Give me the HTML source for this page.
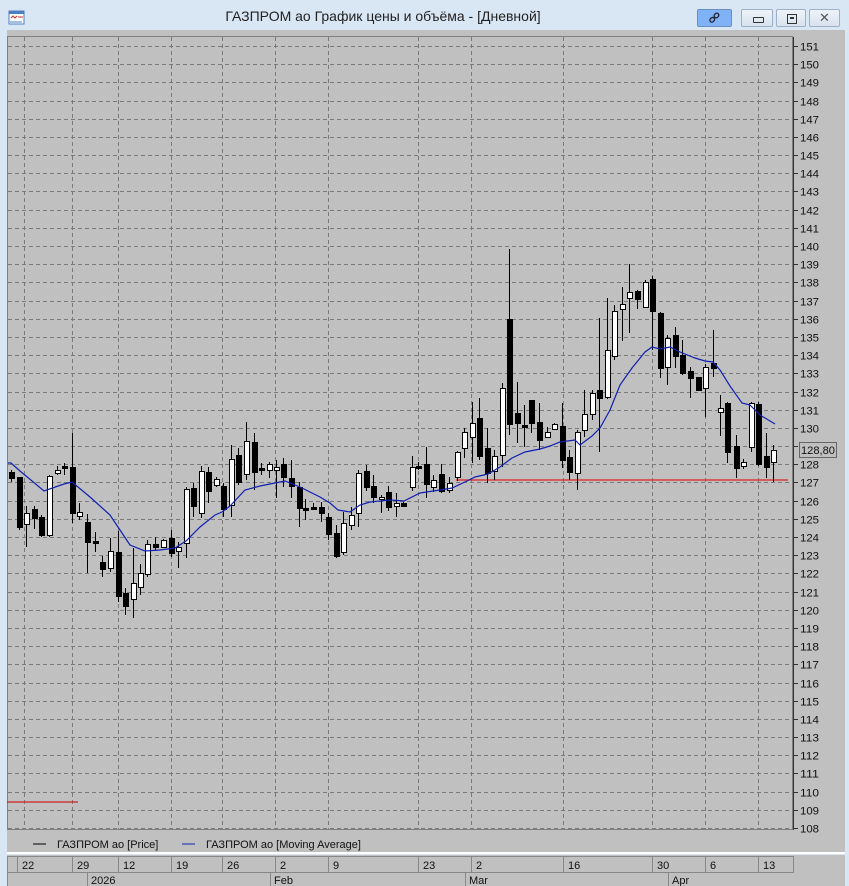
<!DOCTYPE html>
<html><head><meta charset="utf-8">
<style>
html,body{margin:0;padding:0;width:849px;height:886px;overflow:hidden;background:#d9e6f4;font-family:"Liberation Sans","DejaVu Sans",sans-serif;}
#t{position:absolute;left:0;top:8px;width:766px;text-align:center;font-size:14px;color:#222;}
.b{position:absolute;top:9px;height:18px;border:1px solid #9fb0c6;border-radius:2px;background:linear-gradient(#eef3f9,#d8e2ee);box-sizing:border-box;}
svg{position:absolute;left:0;top:0}
</style></head><body>
<svg width="849" height="886" id="s" xmlns="http://www.w3.org/2000/svg" font-family="Liberation Sans, DejaVu Sans, sans-serif">
<rect x="7" y="30" width="838" height="856" fill="#c0c0c0"/>
<g id="g"></g>
</svg>
<div id="t">ГАЗПРОМ ао График цены и объёма - [Дневной]</div>
<div class="b" style="left:697px;width:35px;background:#7fb2f6;border-color:#6b8fc0"><svg width="33" height="16" style="position:static"><g transform="translate(16,8) rotate(-45)" fill="none" stroke="#223" stroke-width="1.3"><rect x="-5" y="-2" width="5" height="4" rx="2"/><rect x="1" y="-2" width="5" height="4" rx="2"/></g></svg></div>
<div class="b" style="left:741px;width:32px"><div style="position:absolute;left:11px;top:7px;width:9px;height:4px;border:1px solid #333;border-radius:1px"></div></div>
<div class="b" style="left:776px;width:30px"><div style="position:absolute;left:10px;top:4px;width:8px;height:8px;border:1px solid #333"></div><div style="position:absolute;left:13px;top:7px;width:4px;height:2px;background:#333"></div></div>
<div class="b" style="left:809px;width:31px"><div style="position:absolute;left:9px;top:0px;font-size:13px;color:#555;font-weight:bold">✕</div></div>
<svg width="20" height="20" style="left:8px;top:10px"><rect x="1" y="1" width="15" height="13" fill="#fff" stroke="#4a7fc0"/><rect x="1" y="1" width="15" height="3" fill="#4a7fc0"/><path d="M3 8 l2-2 2 2 2-2" stroke="#c03030" fill="none"/><path d="M10 7 h5" stroke="#c03030"/><path d="M3 13v-2M5 13v-2M7 13v-2M9 13v-2M11 13v-2M13 13v-2" stroke="#4a7fc0"/></svg>
<script>
var g=document.getElementById('g'),h='';
function Y(p){return 46+(151-p)*18.186;}
// plot border
h+='<rect x="7.5" y="36.5" width="785" height="793" fill="#c0c0c0" stroke="#808080"/>';
for(var p=108;p<=151;p++){var y=Math.round(Y(p))+.5;
h+='<line x1="8" y1="'+y+'" x2="792" y2="'+y+'" stroke="#7a7a7a" stroke-dasharray="4,3"/>';
h+='<line x1="793" y1="'+y+'" x2="798" y2="'+y+'" stroke="#333"/>';
h+='<text x="800" y="'+(y+4)+'" font-size="11" fill="#111" textLength="19" lengthAdjust="spacingAndGlyphs">'+p+'</text>';}
var vx=[24,72,118,171,222,275,328,418,471,563,652,705,758];
vx.forEach(function(x){h+='<line x1="'+(x+.5)+'" y1="37" x2="'+(x+.5)+'" y2="829" stroke="#7a7a7a" stroke-dasharray="4,3"/>';});
h+='<line x1="793.5" y1="37" x2="793.5" y2="830" stroke="#333"/>';
// red lines
h+='<line x1="456" y1="480" x2="788" y2="480" stroke="#e02020" stroke-width="1.3"/>';
h+='<line x1="7" y1="802" x2="78" y2="802" stroke="#d02020" stroke-width="1.3"/>';
// candles: x, wickTop, wickBot, bodyTop, bodyBot, black
var c=[[11,470,482,472,478,1],[19,477,530,477,527,1],[26,506,547,513,524,0],[34,506,529,509,518,1],[41,515,537,517,535,1],[49,475,537,476,535,0],[57,466,475,470,473,0],[64,463,475,466,468,1],[72,433,523,467,513,1],[79,503,520,512,516,0],[87,514,573,522,542,1],[95,532,552,541,543,1],[102,556,577,562,569,1],[110,538,572,551,568,0],[118,531,602,552,596,1],[125,588,615,593,606,1],[133,548,618,583,599,0],[140,564,595,573,587,0],[147,540,577,544,574,0],[155,537,550,544,547,1],[163,539,548,540,547,0],[171,530,557,538,553,1],[178,542,568,547,551,0],[186,487,558,489,543,0],[193,483,517,488,506,1],[201,466,518,471,513,0],[208,467,503,472,491,1],[216,477,487,479,485,0],[223,483,517,486,509,1],[231,445,517,459,505,0],[238,448,485,455,482,1],[246,422,480,441,474,0],[254,433,490,442,472,1],[261,463,475,468,470,1],[269,462,478,464,470,0],[276,460,498,467,470,0],[283,458,487,464,477,1],[291,460,498,478,486,1],[299,482,527,487,508,1],[305,499,520,508,510,1],[313,503,510,507,508,1],[321,502,522,507,513,1],[328,513,540,517,534,1],[336,525,558,533,556,1],[343,512,555,523,552,0],[351,507,530,515,525,0],[358,470,527,473,513,0],[366,465,491,471,487,1],[373,475,503,486,497,1],[381,495,513,497,499,0],[388,486,511,492,507,1],[396,493,517,503,506,0],[403,502,507,503,506,1],[412,456,491,467,487,0],[418,462,470,466,467,1],[426,447,498,464,484,1],[433,475,492,480,487,0],[441,464,493,474,491,1],[449,477,493,483,490,0],[457,451,481,452,477,0],[464,428,458,432,448,0],[472,402,463,423,437,0],[479,398,460,418,456,1],[487,428,483,448,473,1],[494,450,480,456,471,0],[502,383,467,388,455,0],[509,249,435,319,424,1],[517,382,443,413,423,1],[524,405,447,425,427,1],[531,400,433,400,423,1],[539,403,450,422,440,1],[547,427,438,432,437,0],[554,423,430,424,429,0],[562,403,468,426,460,1],[569,450,480,457,472,1],[577,430,490,432,473,0],[584,390,437,414,430,0],[592,390,420,393,414,0],[599,318,452,390,398,1],[607,298,399,350,397,0],[614,305,360,311,356,0],[622,287,341,304,309,0],[629,264,333,292,298,0],[637,290,309,291,299,1],[645,280,308,282,307,0],[652,276,350,279,311,1],[660,312,378,313,368,1],[667,335,385,338,367,0],[675,327,368,335,356,1],[682,340,375,355,373,1],[690,367,398,371,378,1],[698,377,390,377,390,1],[705,364,417,367,388,0],[713,330,377,363,368,1],[720,395,436,408,412,0],[727,402,463,403,452,1],[736,435,478,446,468,1],[743,459,469,462,466,0],[751,402,452,403,447,0],[758,402,466,404,464,1],[766,433,478,456,467,1],[773,445,482,450,462,0]];
c.forEach(function(k){var x=k[0]+.5;
h+='<line x1="'+x+'" y1="'+k[1]+'" x2="'+x+'" y2="'+k[2]+'" stroke="#000"/>';
var hh=Math.max(k[4]-k[3],2);
h+='<rect x="'+(k[0]-2+.5)+'" y="'+(k[3]+.5)+'" width="5" height="'+hh+'" fill="'+(k[5]?'#000':'#fff')+'" stroke="#000"/>';});
var ma=[[8,463],[11,463],[20,471],[44,491],[64,484],[72,482],[90,497],[110,515],[118,527],[130,545],[145,551],[160,550],[175,548],[186,541],[200,527],[215,515],[222,512],[230,506],[245,490],[260,486],[275,483],[285,481],[300,487],[320,497],[330,503],[338,510],[350,512],[360,505],[370,502],[390,500],[404,501],[420,493],[440,490],[452,488],[467,481],[475,477],[488,474],[500,467],[512,458],[525,452],[540,449],[550,446],[560,442],[575,440],[580,445],[592,436],[600,428],[610,410],[620,385],[632,368],[645,352],[652,347],[660,349],[670,347],[680,352],[695,358],[705,361],[713,362],[720,370],[730,386],[742,403],[750,405],[760,415],[775,424]];
h+='<polyline fill="none" stroke="#1020b0" stroke-width="1.2" points="'+ma.map(function(p){return p.join(',')}).join(' ')+'"/>';
// last price box
h+='<rect x="799.5" y="442.5" width="37" height="15" fill="#c0c0c0" stroke="#666"/><text x="801" y="454" font-size="11" fill="#111" textLength="34" lengthAdjust="spacingAndGlyphs">128,80</text>';
// legend
h+='<line x1="33" y1="844" x2="46" y2="844" stroke="#000"/><text x="57" y="848" font-size="11" fill="#111">ГАЗПРОМ ао [Price]</text>';
h+='<line x1="182" y1="844" x2="195" y2="844" stroke="#1020b0"/><text x="206" y="848" font-size="11" fill="#111">ГАЗПРОМ ао [Moving Average]</text>';
h+='<rect x="0" y="852" width="849" height="3" fill="#d9e6f4"/><line x1="7" y1="853" x2="845" y2="853" stroke="#fff" stroke-width="2"/>';
// date axis
h+='<line x1="7" y1="856.5" x2="793" y2="856.5" stroke="#888"/><line x1="7" y1="872.5" x2="793" y2="872.5" stroke="#888"/>';
h+='<line x1="7.5" y1="856" x2="7.5" y2="886" stroke="#888"/><line x1="793.5" y1="856" x2="793.5" y2="873" stroke="#888"/>';
var d=['22','29','12','19','26','2','9','23','2','16','30','6','13'];
h+='<line x1="17.5" y1="856" x2="17.5" y2="872" stroke="#888"/>';
vx.forEach(function(x,i){var xx=[17,72,118,171,222,275,328,418,471,563,652,705,758][i];
if(i>0)h+='<line x1="'+(xx+.5)+'" y1="856" x2="'+(xx+.5)+'" y2="872" stroke="#888"/>';
h+='<text x="'+(xx+5)+'" y="869" font-size="11" fill="#111">'+d[i]+'</text>';});
[[87,'2026'],[270,'Feb'],[465,'Mar'],[668,'Apr']].forEach(function(m){h+='<line x1="'+(m[0]+.5)+'" y1="872" x2="'+(m[0]+.5)+'" y2="886" stroke="#888"/><text x="'+(m[0]+4)+'" y="884" font-size="11" fill="#111">'+m[1]+'</text>';});
g.innerHTML=h;
</script>
</body></html>
